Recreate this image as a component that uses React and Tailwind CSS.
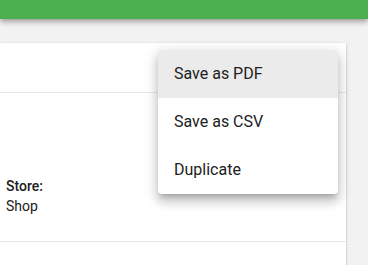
import React from "react";

export default function App() {
  return (
    <div
      className="relative h-[265px] w-[368px] overflow-hidden bg-[#f2f2f2]"
      style={{ fontFamily: "Roboto, 'Liberation Sans', sans-serif" }}
    >
      <div className="h-[19px] bg-[#4caf50] shadow-[0_2px_4px_-1px_rgba(0,0,0,0.2),0_4px_5px_0_rgba(0,0,0,0.14),0_1px_10px_0_rgba(0,0,0,0.12)]" />
      <div className="mt-[24px] w-[346px] bg-white shadow-[0_1px_3px_0_rgba(0,0,0,0.2),0_1px_1px_0_rgba(0,0,0,0.14),0_2px_1px_-1px_rgba(0,0,0,0.12)]">
        <div className="h-[50px] border-b border-[#e6e6e6]" />
        <div className="h-[149px] border-b border-[#e6e6e6] pl-[6px] pt-[83px]">
          <div className="text-[14px] leading-[20px] font-medium text-[#212121]">Store:</div>
          <div className="text-[14px] leading-[20px] text-[#212121]">Shop</div>
        </div>
        <div className="h-[40px]" />
      </div>
      <div className="absolute left-[158px] top-[50px] w-[180px] rounded-[4px] bg-white shadow-[0_5px_5px_-3px_rgba(0,0,0,0.2),0_8px_10px_1px_rgba(0,0,0,0.14),0_3px_14px_2px_rgba(0,0,0,0.12)]">
        {["Save as PDF", "Save as CSV", "Duplicate"].map((t, i) => (
          <div
            key={t}
            className={
              i === 0
                ? "flex h-[48px] items-center rounded-t-[4px] bg-[#ebebeb] pl-[16px] text-[16px] text-[#212121]"
                : "flex h-[48px] items-center pl-[16px] text-[16px] text-[#212121]"
            }
          >
            {t}
          </div>
        ))}
      </div>
    </div>
  );
}
